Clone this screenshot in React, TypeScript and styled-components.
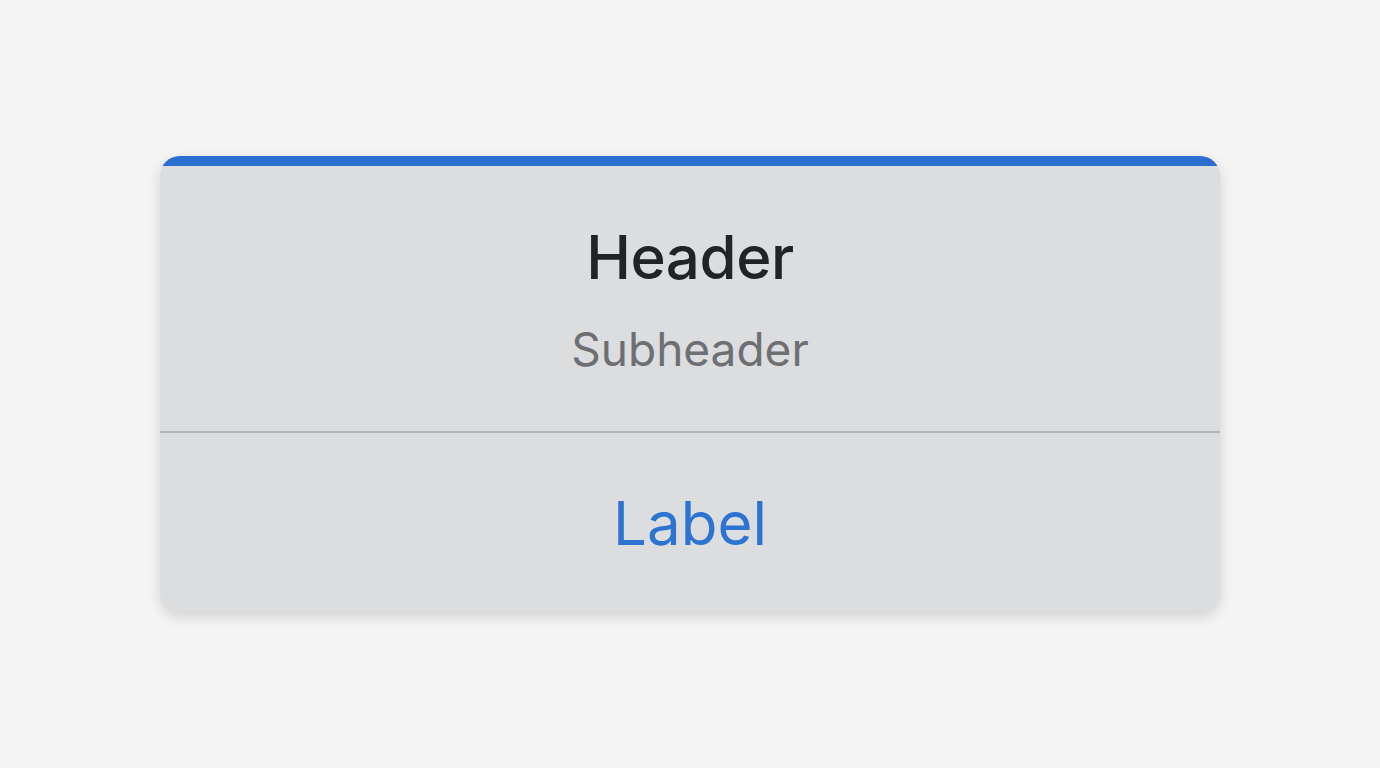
import React from 'react';
import styled, { createGlobalStyle } from 'styled-components';

const GlobalStyle = createGlobalStyle`
  html, body {
    margin: 0;
    padding: 0;
    background-color: #f4f4f4;
    font-family: Inter, "Noto Sans", "Liberation Sans", sans-serif;
  }
`;

const Page = styled.div`
  height: 100vh;
  display: flex;
  align-items: center;
  justify-content: center;
`;

const Card = styled.div`
  width: 1060px;
  height: 456px;
  background-color: #dcdddf;
  border-radius: 20px;
  box-shadow: 0 5px 14px rgba(0, 0, 0, 0.14);
  display: flex;
  flex-direction: column;
  overflow: hidden;
`;

const AccentBar = styled.div`
  height: 10px;
  flex-shrink: 0;
  background-color: #2c6ed0;
`;

const HeaderBlock = styled.div`
  height: 267px;
  flex-shrink: 0;
  display: flex;
  flex-direction: column;
  align-items: center;
  padding-top: 56px;
  box-sizing: border-box;
  border-bottom: 2px solid #b4b5b8;
`;

const Title = styled.h1`
  margin: 0;
  font-size: 60px;
  line-height: 70px;
  font-weight: 500;
  color: #222325;
  letter-spacing: -0.4px;
`;

const Subtitle = styled.p`
  margin: 29px 0 0;
  font-size: 46px;
  line-height: 56px;
  font-weight: 400;
  color: #6e6f73;
`;

const ActionBlock = styled.div`
  flex: 1;
  display: flex;
  align-items: center;
  justify-content: center;
`;

const ActionLabel = styled.button`
  border: none;
  background: none;
  padding: 0;
  font-family: inherit;
  font-size: 60px;
  font-weight: 400;
  color: #2c73d2;
  cursor: pointer;
`;

const App: React.FC = () => {
  return (
    <>
      <GlobalStyle />
      <Page>
        <Card>
          <AccentBar />
          <HeaderBlock>
            <Title>Header</Title>
            <Subtitle>Subheader</Subtitle>
          </HeaderBlock>
          <ActionBlock>
            <ActionLabel>Label</ActionLabel>
          </ActionBlock>
        </Card>
      </Page>
    </>
  );
};

export default App;
